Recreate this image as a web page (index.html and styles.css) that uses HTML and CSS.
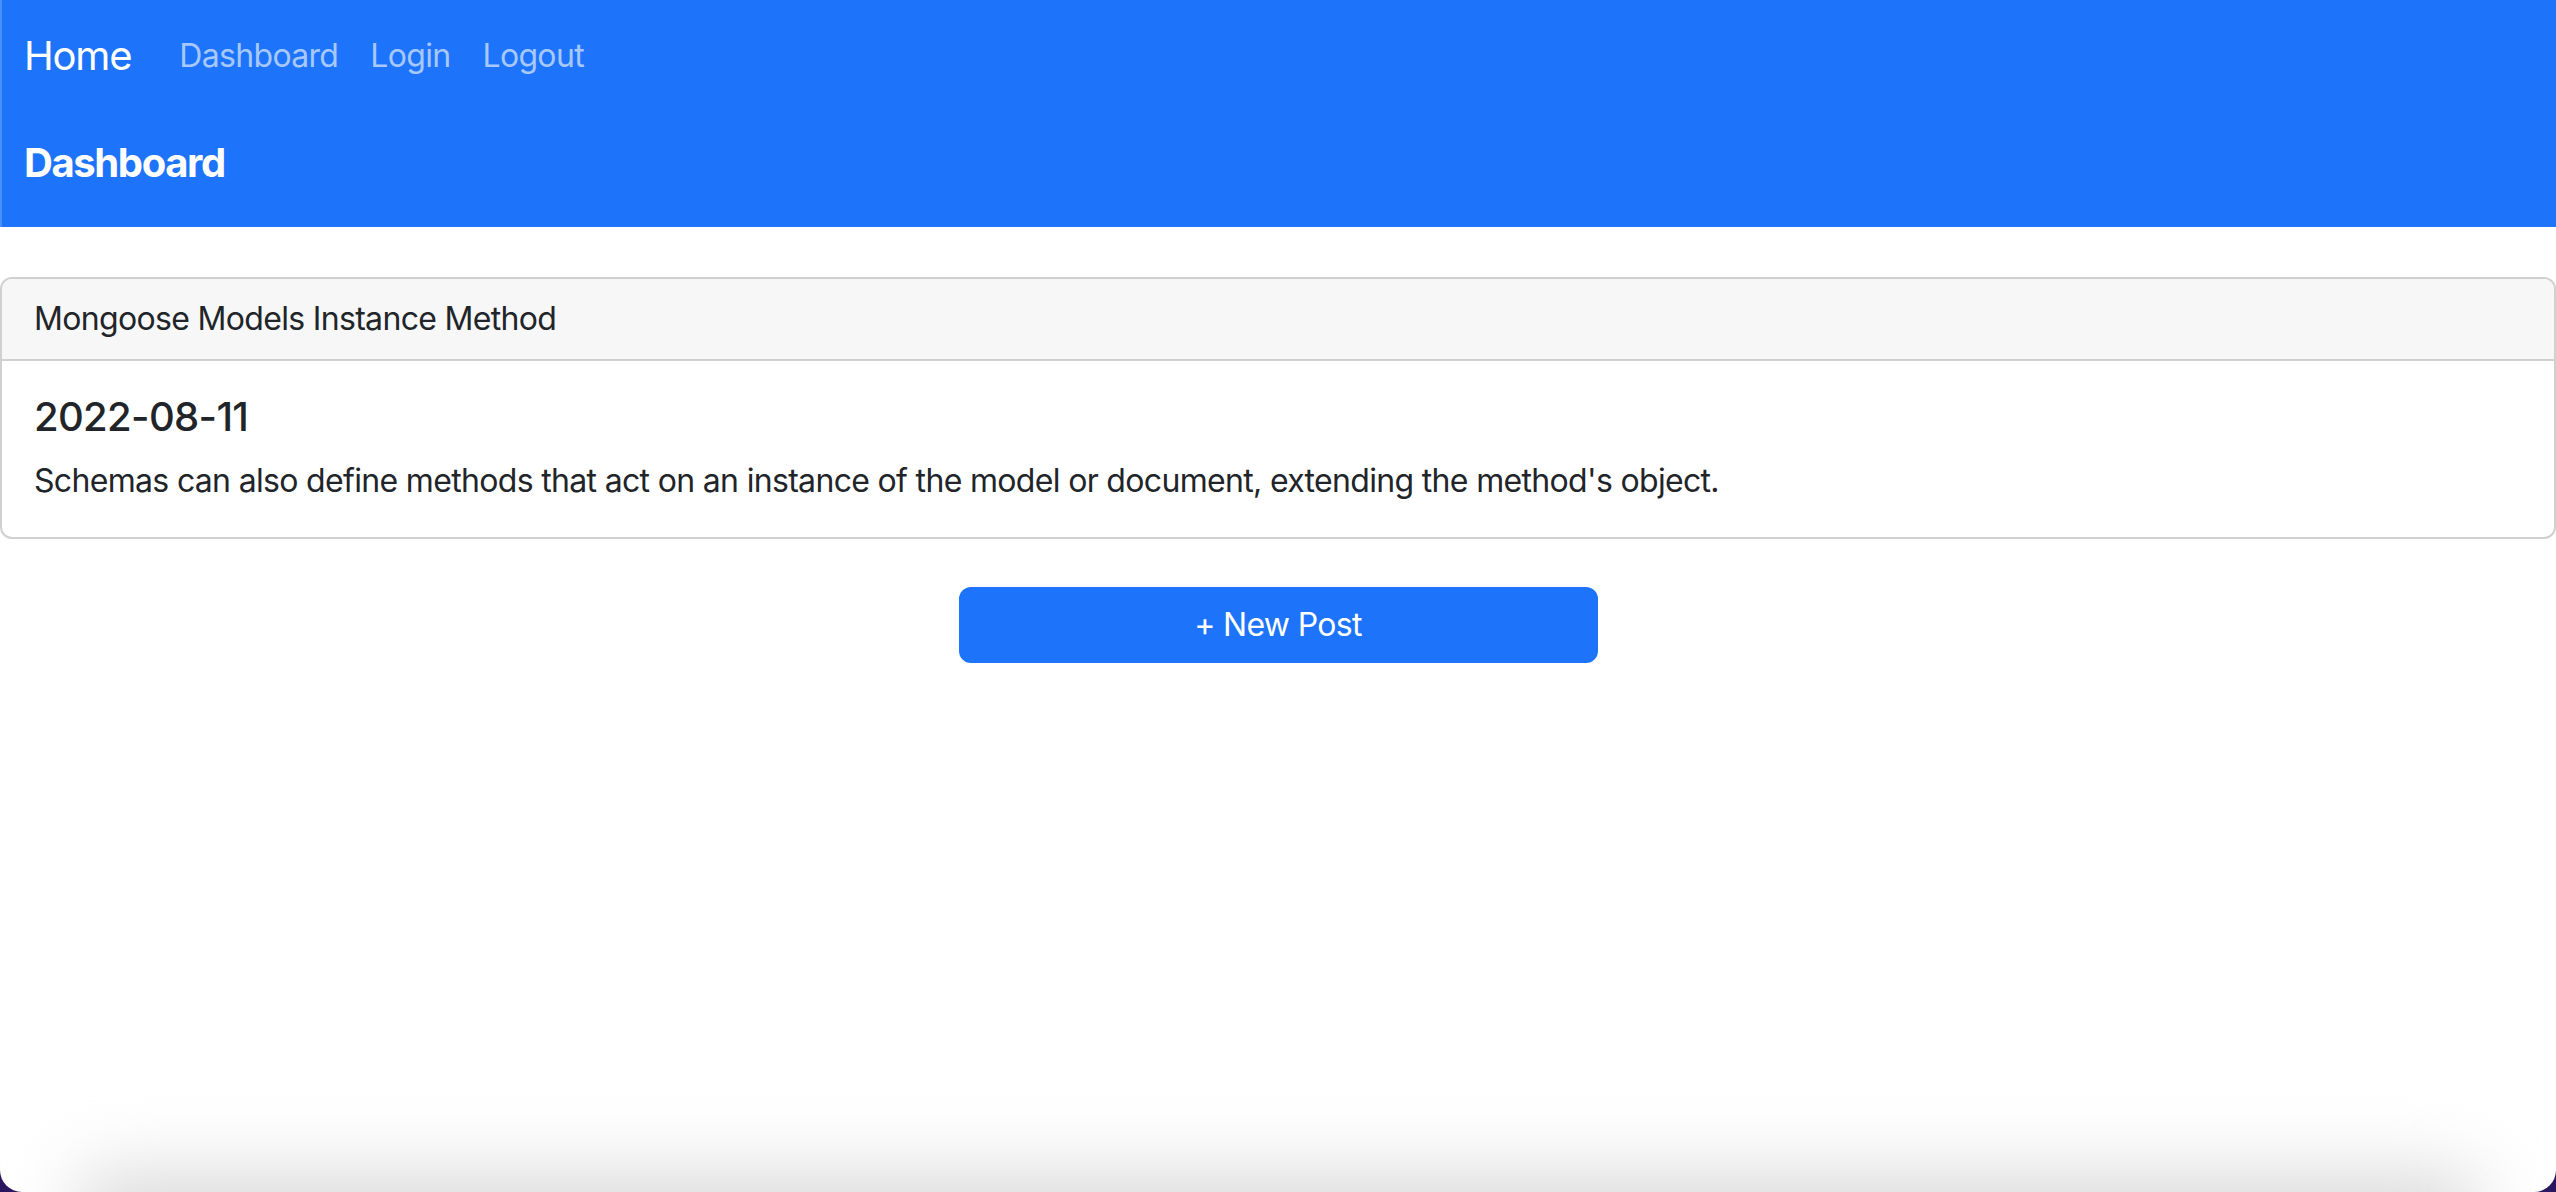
FILE: index.html
```html
<!DOCTYPE html>
<html lang="en">
<head>
<meta charset="utf-8">
<title>Dashboard</title>
<link rel="stylesheet" href="styles.css">
</head>
<body>
<header class="navbar">
  <div class="nav-row">
    <a class="brand" href="#">Home</a>
    <ul class="nav">
      <li><a class="nav-link" href="#">Dashboard</a></li>
      <li><a class="nav-link" href="#">Login</a></li>
      <li><a class="nav-link" href="#">Logout</a></li>
    </ul>
  </div>
  <h5 class="page-title">Dashboard</h5>
</header>
<main class="content">
  <div class="card">
    <div class="card-header">Mongoose Models Instance Method</div>
    <div class="card-body">
      <h5 class="card-title">2022-08-11</h5>
      <p class="card-text">Schemas can also define methods that act on an instance of the model or document, extending the method's object.</p>
    </div>
  </div>
  <div class="actions">
    <a class="btn" href="#">+ New Post</a>
  </div>
</main>
<div class="bottom-shade"></div>
</body>
</html>
```
FILE: styles.css
```css
html {
  background: #2a1660;
  height: 100%;
}
body {
  margin: 0;
  min-height: 100%;
  background: #ffffff;
  color: #212529;
  font-family: Inter, "Noto Sans", "Liberation Sans", sans-serif;
  font-size: 32px;
  line-height: 48px;
  letter-spacing: -0.021em;
  border-radius: 0 0 22px 22px;
  overflow: hidden;
  position: relative;
}
a { text-decoration: none; }

.navbar {
  background: #1d74fb;
  padding: 16px 0;
  border-left: 2px solid #4a8ffb;
}
.nav-row {
  display: flex;
  align-items: center;
  padding: 0 22px;
}
.brand {
  color: #ffffff;
  font-size: 40px;
  line-height: 60px;
  padding: 10px 0;
  margin-right: 32px;
  letter-spacing: -0.03em;
}
.nav {
  display: flex;
  list-style: none;
  margin: 0;
  padding: 0;
}
.nav-link {
  display: block;
  color: #a6c8fd;
  font-size: 32px;
  line-height: 48px;
  padding: 16px 16px;
}
.page-title {
  margin: 37px 0 18px;
  padding: 0 22px;
  color: #ffffff;
  font-size: 40px;
  line-height: 60px;
  font-weight: 700;
  letter-spacing: -0.035em;
}

.content {
  padding-top: 50px;
}
.card {
  border: 2px solid #d0d0d0;
  border-radius: 12px;
  overflow: hidden;
}
.card-header {
  background: #f7f7f7;
  border-bottom: 2px solid #d0d0d0;
  padding: 16px 32px;
  font-size: 32px;
  line-height: 48px;
}
.card-body {
  padding: 32px;
}
.card-title {
  margin: 0 0 16px;
  font-size: 40px;
  line-height: 48px;
  font-weight: 500;
}
.card-text {
  margin: 0;
}
.actions {
  display: flex;
  justify-content: center;
  margin-top: 48px;
}
.btn {
  width: 25%;
  box-sizing: border-box;
  text-align: center;
  background: #1d74fb;
  border: 2px solid #1d74fb;
  border-radius: 12px;
  color: #ffffff;
  font-size: 32px;
  line-height: 48px;
  padding: 12px 24px;
}

.bottom-shade {
  position: fixed;
  left: 80px;
  right: 80px;
  bottom: -80px;
  height: 100px;
  background: #dadada;
  filter: blur(36px);
  pointer-events: none;
}
```
